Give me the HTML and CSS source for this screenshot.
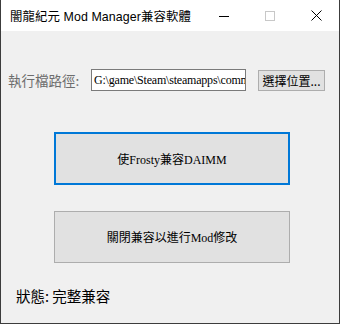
FILE: index.html
```html
<!DOCTYPE html>
<html>
<head>
<meta charset="utf-8">
<link rel="stylesheet" href="styles.css">
</head>
<body>
<div class="window">
  <div class="titlebar">
    <div class="title">闇龍紀元 Mod Manager兼容軟體</div>
    <div class="caps">
      <div class="cap"><svg width="10" height="10" viewBox="0 0 10 10"><path d="M0 5.5H10" stroke="#000" stroke-width="1"/></svg></div>
      <div class="cap"><svg width="10" height="10" viewBox="0 0 10 10"><rect x="0.5" y="0.5" width="9" height="9" fill="none" stroke="#c8c8c8" stroke-width="1"/></svg></div>
      <div class="cap"><svg width="11" height="11" viewBox="0 0 11 11"><path d="M0.5 0.5L10.5 10.5M10.5 0.5L0.5 10.5" stroke="#000" stroke-width="1"/></svg></div>
    </div>
  </div>
  <div class="content">
    <div class="pathrow">
      <span class="label">執行檔路徑:</span>
      <div class="textbox"><span class="tbtext">G:\game\Steam\steamapps\comm</span></div>
      <div class="smallbtn">選擇位置...</div>
    </div>
    <div class="bigbtn focused">使Frosty兼容DAIMM</div>
    <div class="bigbtn second">關閉兼容以進行Mod修改</div>
    <div class="status">狀態: 完整兼容</div>
  </div>
</div>
</body>
</html>
```
FILE: styles.css
```css
html, body {
  margin: 0;
  padding: 0;
  background: #3a3a3a;
}
.window {
  width: 338px;
  height: 323px;
  border: 1px solid #3c3c3c;
  border-top: none;
  background: #f0f0f0;
  display: flex;
  flex-direction: column;
  font-family: "Noto Sans CJK TC", "Noto Sans", sans-serif;
}
.titlebar {
  height: 31px;
  background: #fff;
  display: flex;
  align-items: center;
  justify-content: space-between;
}
.title {
  padding-left: 9px;
  font-size: 12.4px;
  color: #000;
  letter-spacing: 0.1px;
  font-family: "Liberation Sans", "Noto Sans CJK TC", sans-serif;
}
.caps {
  display: flex;
  height: 31px;
}
.cap {
  width: 46px;
  height: 31px;
  display: flex;
  align-items: center;
  justify-content: center;
}
.content {
  flex: 1;
  display: flex;
  flex-direction: column;
  padding-top: 38px;
}
.pathrow {
  display: flex;
  align-items: center;
  height: 22px;
}
.label {
  margin-left: 7px;
  width: 83px;
  font-size: 13.5px;
  color: #6d6d6d;
  white-space: nowrap;
}
.textbox {
  box-sizing: border-box;
  width: 155px;
  height: 22px;
  border: 1px solid #7a7a7a;
  background: #fff;
  padding-left: 2px;
  overflow: hidden;
  display: flex;
  align-items: center;
}
.tbtext {
  font-family: "Liberation Serif", "Noto Sans CJK TC", serif;
  font-size: 12px;
  letter-spacing: -0.2px;
  white-space: nowrap;
  color: #000;
}
.smallbtn {
  box-sizing: border-box;
  margin-left: 12px;
  width: 67px;
  height: 21px;
  border: 1px solid #adadad;
  background: #e1e1e1;
  font-size: 12px;
  line-height: 19px;
  text-align: center;
  color: #000;
  white-space: nowrap;
}
.bigbtn {
  box-sizing: border-box;
  margin-left: 53px;
  width: 236px;
  height: 53px;
  background: #e1e1e1;
  border: 1px solid #adadad;
  display: flex;
  align-items: center;
  justify-content: center;
  font-family: "Liberation Serif", "Noto Sans CJK TC", serif;
  font-size: 12px;
  color: #000;
}
.bigbtn.focused {
  margin-top: 41px;
  border: 2px solid #0078d7;
}
.bigbtn.second {
  margin-top: 26px;
  height: 52px;
}
.status {
  margin-top: 22px;
  margin-left: 15px;
  font-size: 14.5px;
  color: #000;
}
```
